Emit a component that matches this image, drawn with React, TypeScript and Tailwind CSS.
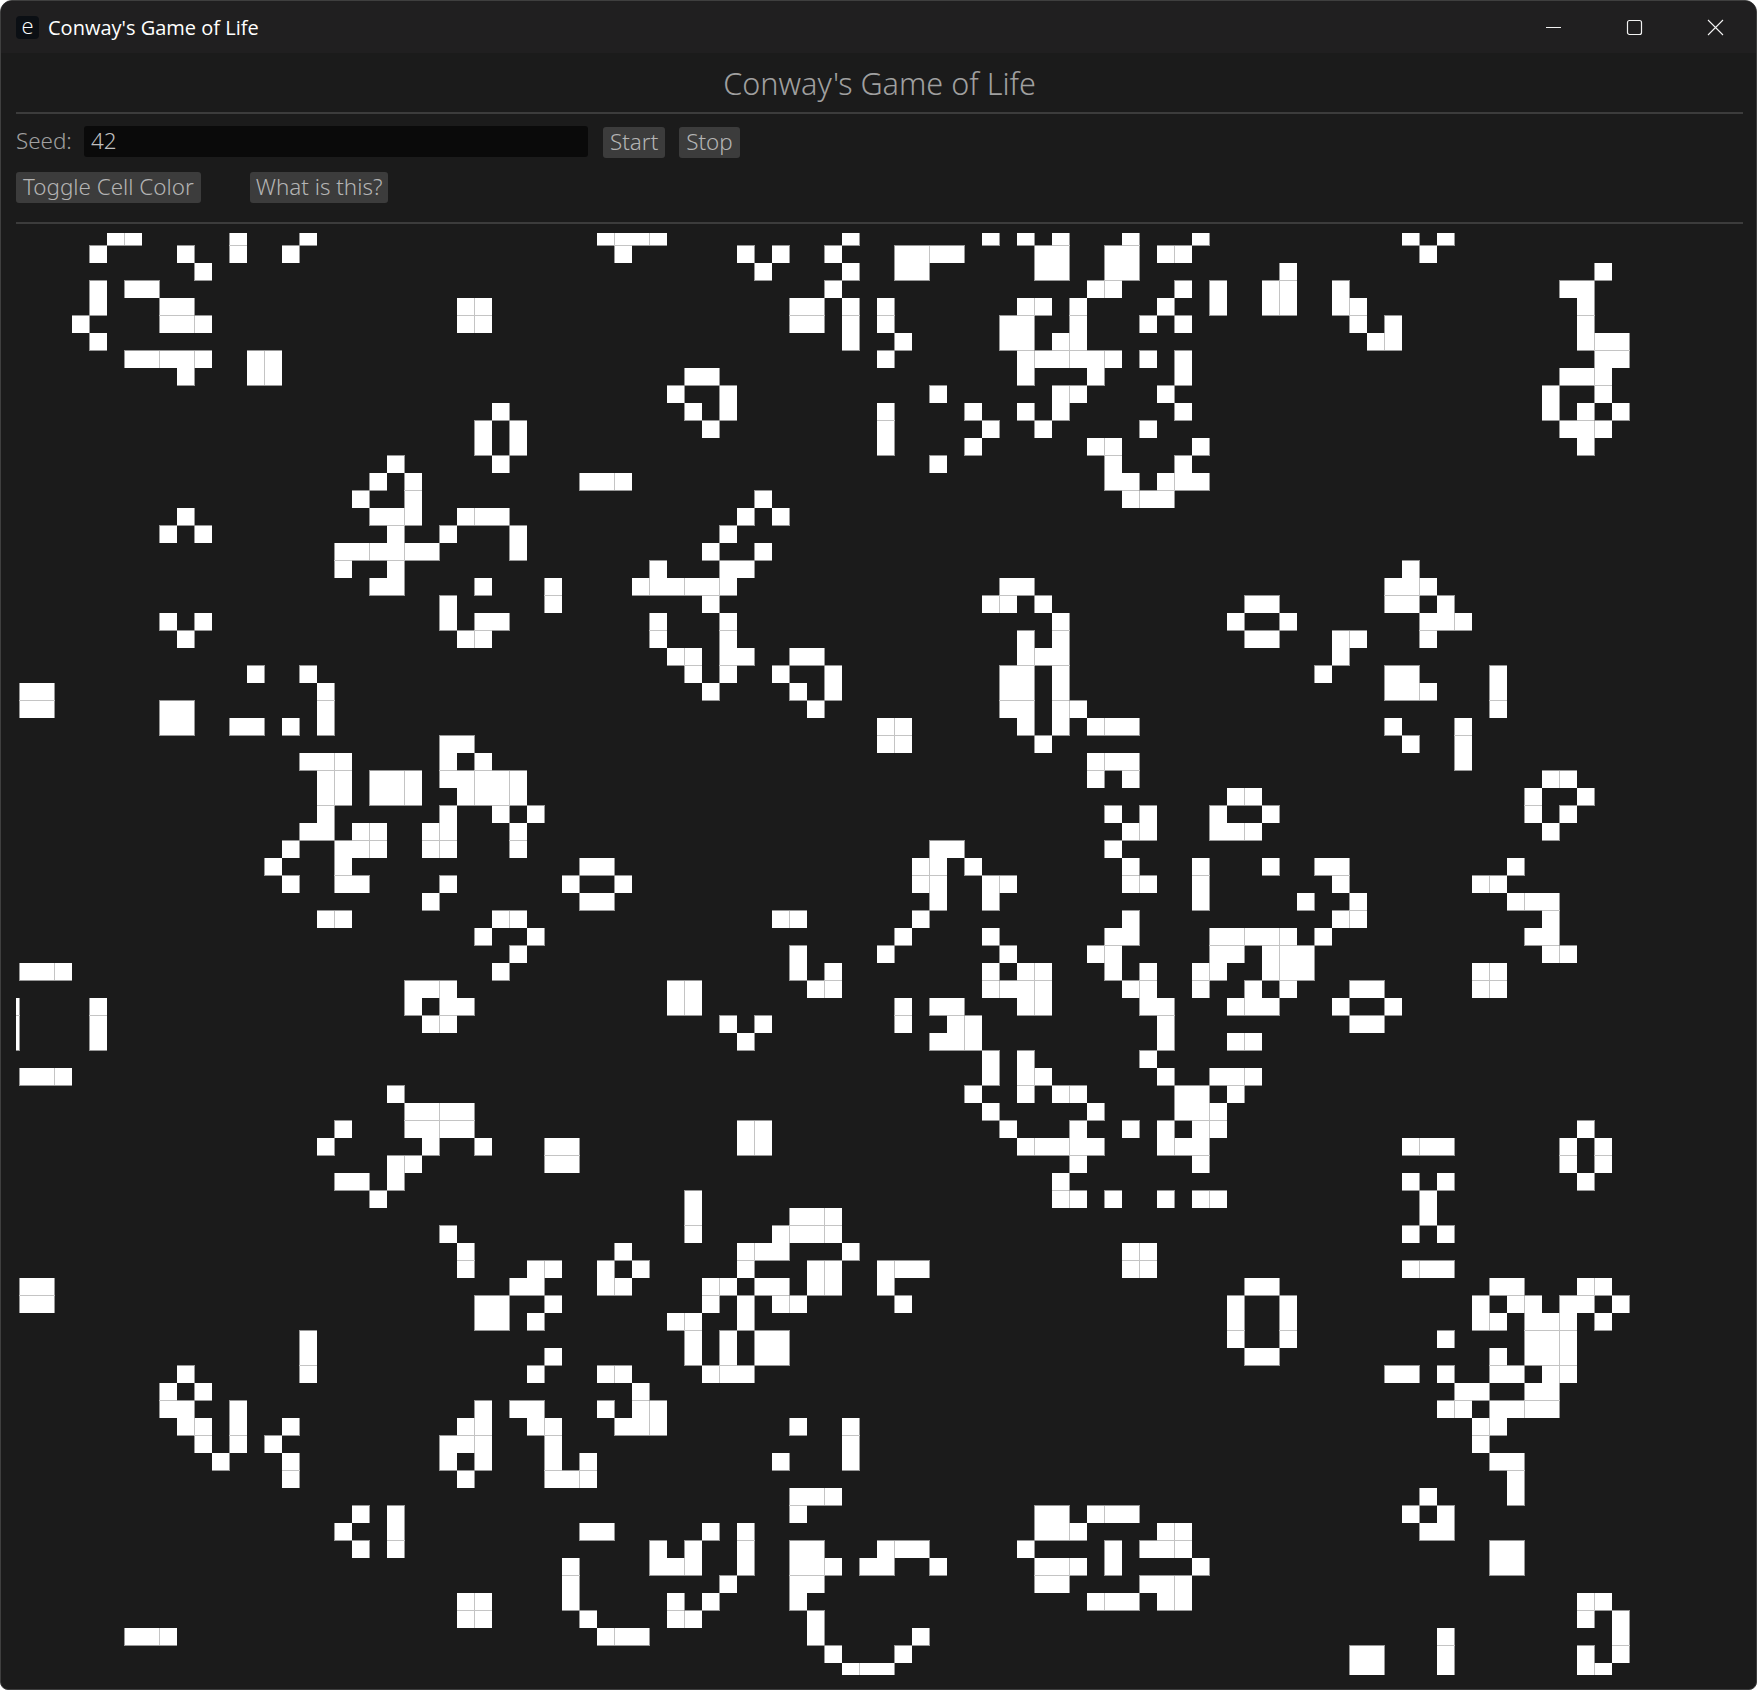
const CELL = 17.5
const ORIGIN_X = 3
const ORIGIN_Y = -5.5

// live cells, one line per row of the board: column numbers
const BOARD: number[][] = [
  [5, 6, 12, 16, 33, 34, 35, 36, 47, 55, 57, 59, 63, 67, 79, 81],
  [4, 9, 12, 15, 34, 41, 43, 46, 50, 51, 52, 53, 58, 59, 62, 63, 65, 66, 80],
  [10, 42, 47, 50, 51, 58, 59, 62, 63, 72, 90],
  [4, 6, 7, 46, 61, 62, 66, 68, 71, 72, 75, 88, 89],
  [4, 8, 9, 25, 26, 44, 45, 47, 49, 57, 58, 60, 65, 68, 71, 72, 75, 76, 89],
  [3, 8, 9, 10, 25, 26, 44, 45, 47, 49, 56, 57, 60, 64, 66, 76, 78, 89],
  [4, 47, 50, 56, 57, 59, 60, 77, 78, 89, 90, 91],
  [6, 7, 8, 9, 10, 13, 14, 49, 57, 58, 59, 60, 61, 62, 64, 66, 90, 91],
  [9, 13, 14, 38, 39, 57, 61, 66, 88, 89, 90],
  [37, 40, 52, 59, 60, 65, 87, 90],
  [27, 38, 40, 49, 54, 57, 59, 66, 87, 89, 91],
  [26, 28, 39, 49, 55, 58, 64, 88, 89, 90],
  [26, 28, 49, 54, 61, 62, 67, 89],
  [21, 27, 52, 62, 66],
  [20, 22, 32, 33, 34, 62, 63, 65, 66, 67],
  [19, 22, 42, 63, 64, 65],
  [9, 20, 21, 22, 25, 26, 27, 41, 43],
  [8, 10, 21, 24, 28, 40],
  [18, 19, 20, 21, 22, 23, 28, 39, 42],
  [18, 21, 36, 40, 41, 79],
  [20, 21, 26, 30, 35, 36, 37, 38, 39, 40, 56, 57, 78, 79, 80],
  [24, 30, 39, 55, 56, 58, 70, 71, 78, 79, 81],
  [8, 10, 24, 26, 27, 36, 40, 59, 69, 72, 80, 81, 82],
  [9, 25, 26, 36, 40, 57, 59, 70, 71, 75, 76, 80],
  [37, 38, 40, 41, 44, 45, 57, 58, 59, 75],
  [13, 16, 38, 40, 43, 46, 56, 57, 59, 74, 78, 79, 84],
  [0, 1, 17, 39, 44, 46, 56, 57, 59, 78, 79, 80, 84],
  [0, 1, 8, 9, 17, 45, 56, 57, 59, 60, 84],
  [8, 9, 12, 13, 15, 17, 49, 50, 57, 59, 61, 62, 63, 78, 82],
  [24, 25, 49, 50, 58, 79, 82],
  [16, 17, 18, 24, 26, 61, 62, 63, 82],
  [17, 18, 20, 21, 22, 24, 25, 26, 27, 28, 61, 63, 87, 88],
  [17, 18, 20, 21, 22, 25, 26, 27, 28, 69, 70, 86, 89],
  [17, 24, 27, 29, 62, 64, 68, 71, 86, 88],
  [16, 17, 19, 20, 23, 24, 28, 63, 64, 68, 69, 70, 87],
  [15, 18, 19, 20, 23, 24, 28, 52, 53, 62],
  [14, 18, 32, 33, 51, 52, 54, 63, 67, 71, 74, 75, 85],
  [15, 18, 19, 24, 31, 34, 51, 52, 55, 56, 63, 64, 67, 75, 83, 84],
  [23, 32, 33, 52, 55, 67, 73, 76, 85, 86, 87],
  [17, 18, 27, 28, 43, 44, 51, 63, 75, 76, 87],
  [26, 29, 50, 55, 62, 63, 68, 69, 70, 71, 72, 74, 86, 87],
  [28, 44, 49, 56, 61, 62, 68, 69, 71, 72, 73, 87, 88],
  [0, 1, 2, 27, 44, 46, 55, 57, 58, 62, 64, 67, 68, 71, 72, 73, 83, 84],
  [22, 23, 24, 37, 38, 45, 46, 55, 56, 57, 58, 63, 64, 67, 70, 72, 76, 77, 83, 84],
  [-1, 4, 22, 24, 25, 37, 38, 50, 52, 53, 57, 58, 64, 65, 69, 70, 71, 75, 78],
  [-1, 4, 23, 24, 40, 42, 50, 53, 54, 65, 76, 77],
  [-1, 4, 41, 52, 53, 54, 65, 69, 70],
  [55, 57, 64],
  [0, 1, 2, 55, 57, 58, 65, 68, 69, 70],
  [21, 54, 57, 59, 60, 66, 67, 69],
  [22, 23, 24, 25, 55, 61, 66, 67, 68],
  [18, 22, 23, 24, 25, 41, 42, 56, 60, 63, 65, 67, 68, 89],
  [17, 23, 26, 30, 31, 41, 42, 57, 58, 59, 60, 61, 65, 66, 67, 79, 80, 81, 88, 90],
  [21, 22, 30, 31, 60, 67, 88, 90],
  [18, 19, 21, 59, 79, 81, 89],
  [20, 38, 59, 60, 62, 65, 67, 68, 80],
  [38, 44, 45, 46, 80],
  [24, 38, 43, 44, 45, 46, 79, 81],
  [25, 34, 41, 42, 43, 47, 63, 64],
  [25, 29, 30, 33, 35, 41, 45, 46, 49, 50, 51, 63, 64, 79, 80, 81],
  [0, 1, 28, 29, 33, 34, 39, 40, 42, 43, 45, 46, 49, 70, 71, 84, 85, 89, 90],
  [0, 1, 26, 27, 30, 39, 41, 43, 44, 50, 69, 72, 83, 85, 86, 88, 89, 91],
  [26, 27, 29, 37, 38, 41, 69, 72, 83, 84, 86, 87, 88, 90],
  [16, 38, 40, 42, 43, 69, 72, 81, 86, 87, 88],
  [16, 30, 38, 40, 42, 43, 70, 71, 84, 86, 87, 88],
  [9, 16, 29, 33, 34, 39, 40, 41, 78, 79, 81, 84, 85, 87, 88],
  [8, 10, 35, 82, 83, 86, 87],
  [8, 9, 12, 26, 28, 29, 33, 35, 36, 81, 82, 84, 85, 86, 87],
  [9, 10, 12, 15, 25, 26, 29, 30, 34, 35, 36, 44, 47, 83, 84],
  [10, 12, 14, 24, 25, 26, 30, 47, 83],
  [11, 15, 24, 26, 30, 32, 43, 47, 84, 85],
  [15, 25, 30, 31, 32, 85],
  [44, 45, 46, 80, 85],
  [19, 21, 44, 58, 59, 61, 62, 63, 79, 81],
  [18, 21, 32, 33, 39, 41, 58, 59, 60, 65, 66, 80, 81],
  [19, 21, 36, 38, 41, 44, 45, 49, 50, 51, 57, 62, 64, 65, 66, 84, 85],
  [31, 36, 37, 38, 41, 44, 45, 46, 48, 49, 52, 58, 59, 60, 62, 67, 84, 85],
  [31, 40, 44, 45, 58, 59, 64, 65, 66],
  [25, 26, 31, 37, 39, 44, 61, 62, 63, 65, 66, 89, 90],
  [25, 26, 32, 37, 38, 45, 89, 91],
  [6, 7, 8, 33, 34, 35, 45, 51, 81, 91],
  [46, 50, 76, 77, 81, 89, 91],
  [47, 48, 49, 76, 77, 81, 89, 90],
]

const isAlive = (row: number, col: number) =>
  BOARD[row]?.includes(col) ?? false

const colX = (col: number) => Math.ceil(ORIGIN_X + col * CELL)
const rowY = (row: number) => Math.ceil(ORIGIN_Y + row * CELL)

// the cell borders only land on every other pixel boundary
function Cell({ row, col }: { row: number; col: number }) {
  const x = colX(col)
  const y = rowY(row)
  const w = colX(col + 1) - x
  const h = rowY(row + 1) - y
  const evenCol = col % 2 === 0
  const oddRow = row % 2 !== 0
  const sideAlive = isAlive(row, evenCol ? col - 1 : col + 1)
  const capAlive = isAlive(oddRow ? row - 1 : row + 1, col)

  return (
    <>
      <rect x={x} y={y} width={w} height={h} fill="#ffffff" />
      <rect
        x={evenCol ? x : x + w}
        y={y}
        width={1}
        height={h + (oddRow ? 0 : 1)}
        fill={sideAlive ? '#c4c4c4' : '#989898'}
      />
      <rect
        x={x}
        y={oddRow ? y : y + h}
        width={w + (evenCol ? 0 : 1)}
        height={1}
        fill={capAlive ? '#c4c4c4' : '#989898'}
      />
    </>
  )
}

function Board() {
  return (
    <svg
      className="block h-[1442px] w-[1725px]"
      viewBox="0 0 1725 1442"
      shapeRendering="crispEdges"
    >
      {BOARD.map((cols, row) =>
        cols.map((col) => <Cell key={`${row}-${col}`} row={row} col={col} />),
      )}
    </svg>
  )
}

function WindowIcon({ children }: { children: React.ReactNode }) {
  return (
    <div className="flex w-[81px] justify-center">
      <svg
        width="17"
        height="17"
        viewBox="0 0 17 17"
        fill="none"
        stroke="#f2f2f2"
        strokeWidth="1"
      >
        {children}
      </svg>
    </div>
  )
}

function TitleBar() {
  return (
    <div className="flex h-[52px] shrink-0 items-center bg-[#201f20] pl-[15px] font-['Open_Sans',sans-serif] text-[20px] text-white">
      <div className="flex h-[23px] w-[23px] items-center justify-center rounded-[4px] bg-[#0b0f14] pb-1 text-[22px] font-light">
        e
      </div>
      <span className="ml-[9px] mt-[2px]">Conway's Game of Life</span>
      <div className="ml-auto flex items-center">
        <WindowIcon>
          <path d="M1 8.5h15" />
        </WindowIcon>
        <WindowIcon>
          <rect x="1.5" y="1.5" width="14" height="14" rx="2" strokeWidth="1.2" />
        </WindowIcon>
        <WindowIcon>
          <path d="M1 1l15 15M16 1L1 16" strokeWidth="1.1" />
        </WindowIcon>
      </div>
    </div>
  )
}

function Button({ label }: { label: string }) {
  return (
    <button className="h-[31px] rounded-[3px] bg-[#3c3c3c] px-[7px] pb-[2px] leading-[29px] text-[#b4b4b4]">
      {label}
    </button>
  )
}

function App() {
  return (
    <div className="flex h-[1690px] w-full flex-col overflow-hidden rounded-t-[12px] rounded-b-[8px] border border-[#3f3f3f] bg-[#1b1b1b]">
      <TitleBar />
      <div className="flex flex-1 flex-col pl-[15px] pr-[13px] font-['Noto_Sans',sans-serif] text-[22.4px] font-light text-[#a0a0a0]">
        <h1 className="h-[59px] pt-[2px] text-center text-[30.6px] font-light leading-[56px] text-[#a0a0a0]">
          Conway's Game of Life
        </h1>
        <div className="h-[2px] bg-[#3c3c3c]" />
        <div className="mt-[12px] flex h-[31px] items-center">
          <span className="w-[68px] pb-[2px]">Seed:</span>
          <div className="flex h-[31px] w-[504px] items-center rounded-[3px] bg-[#0a0a0a] px-[7px] pb-[2px] text-[#c0c0c0]">
            42
          </div>
          <div className="ml-[15px]">
            <Button label="Start" />
          </div>
          <div className="ml-[14px]">
            <Button label="Stop" />
          </div>
        </div>
        <div className="mt-[15px] flex h-[31px] items-center gap-[49px]">
          <Button label="Toggle Cell Color" />
          <button className="h-[31px] rounded-[3px] bg-[#3c3c3c] px-[6px] pb-[2px] leading-[29px] text-[#b4b4b4]">
            What is this?
          </button>
        </div>
        <div className="mt-[19px] h-[2px] bg-[#3c3c3c]" />
        <div className="mt-[9px]">
          <Board />
        </div>
      </div>
    </div>
  )
}

export default App
